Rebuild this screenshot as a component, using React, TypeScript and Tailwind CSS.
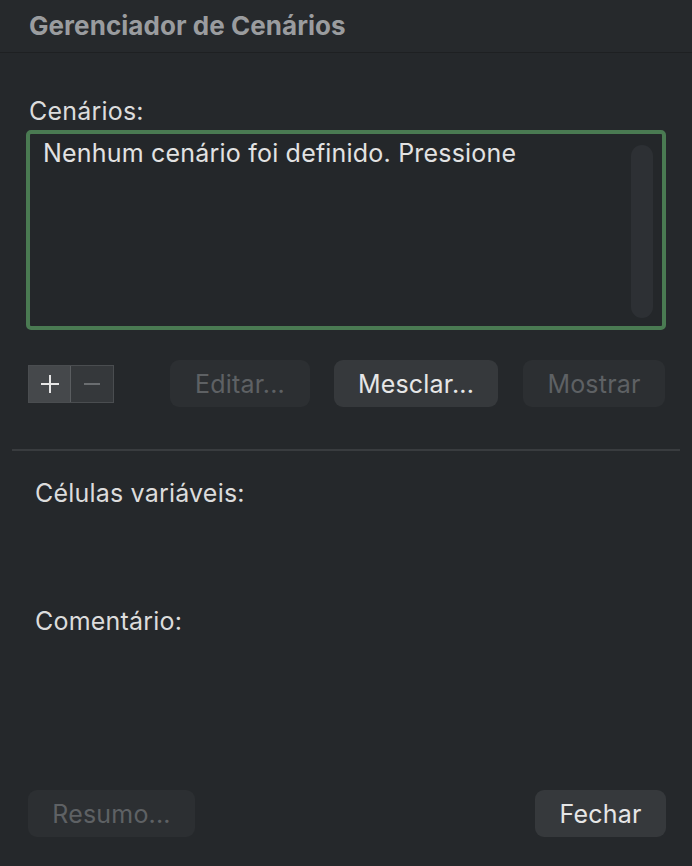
import React from "react";

export default function App() {
  return (
    <div
      className="w-[692px] h-[866px] bg-[#25282b] flex flex-col overflow-hidden tracking-[0.2px]"
      style={{ fontFamily: "Inter, 'Liberation Sans', sans-serif" }}
    >
      <div className="h-[53px] shrink-0 border-b border-[#1e2022] bg-[#26292c] flex items-center pl-[29px]">
        <span className="text-[26px] font-bold text-[#9a9c9f] tracking-[0.05px] leading-[30px]">Gerenciador de Cenários</span>
      </div>

      <div className="flex flex-col px-[26px] pt-[43px]">
        <div className="pl-[3px] text-[25px] text-[#dcdcdc] leading-[30px]">Cenários:</div>
        <div className="mt-[4px] h-[200px] rounded-[5px] border-[4px] border-[#4a7a52] bg-[#24272a] flex pl-[13px] pr-[9px] pt-[4px] pb-[8px]">
          <div className="flex-1 text-[25px] text-[#e2e2e2] leading-[30px]">Nenhum cenário foi definido. Pressione</div>
          <div className="w-[22px] mt-[7px] rounded-full bg-[#2d3034]" />
        </div>

        <div className="mt-[30px] flex items-center">
          <div className="flex h-[38px] ml-[2px] border border-[#4a4d50]">
            <div className="w-[42px] bg-[#45484b] border-r border-[#5a5d60] flex items-center justify-center">
              <svg width="22" height="22" viewBox="0 0 22 22"><path d="M11 2v18M2 11h18" stroke="#e6e6e6" strokeWidth="2" /></svg>
            </div>
            <div className="w-[42px] bg-[#35383b] flex items-center justify-center">
              <svg width="22" height="22" viewBox="0 0 22 22"><path d="M3 11h16" stroke="#6a6d70" strokeWidth="2" /></svg>
            </div>
          </div>
          <button className="ml-[56px] w-[140px] h-[47px] pt-[2px] rounded-[9px] bg-[#2c2f32] text-[25px] text-[#5e6164]">Editar...</button>
          <button className="ml-[24px] w-[164px] h-[47px] pt-[2px] rounded-[9px] bg-[#36393c] text-[25px] text-[#e6e6e6]">Mesclar...</button>
          <button className="ml-[25px] w-[142px] h-[47px] pt-[2px] rounded-[9px] bg-[#2c2f32] text-[25px] text-[#5e6164]">Mostrar</button>
        </div>
      </div>

      <div className="mx-[12px] mt-[42px] h-[2px] bg-[#393c3f]" />

      <div className="flex flex-col px-[35px] flex-1">
        <div className="mt-[27px] text-[25px] text-[#dcdcdc] leading-[30px]">Células variáveis:</div>
        <div className="mt-[98px] text-[25px] text-[#dcdcdc] leading-[30px]">Comentário:</div>
      </div>

      <div className="flex justify-between px-[26px] pb-[29px]">
        <button className="ml-[2px] w-[167px] h-[47px] pt-[2px] rounded-[9px] bg-[#2c2f32] text-[25px] text-[#5e6164]">Resumo...</button>
        <button className="w-[131px] h-[47px] pt-[2px] rounded-[9px] bg-[#36393c] text-[25px] text-[#e6e6e6]">Fechar</button>
      </div>
    </div>
  );
}
